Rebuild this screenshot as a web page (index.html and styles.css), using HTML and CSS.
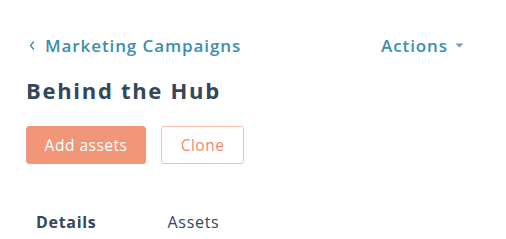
FILE: index.html
```html
<!DOCTYPE html>
<html><head><meta charset="utf-8"><link rel="stylesheet" href="styles.css"></head>
<body>
<div class="page">
  <div class="header">
    <a class="crumb" href="#">
      <svg class="chev" width="6" height="9" viewBox="0 0 6 9"><path d="M4.5 1 L1.5 4.5 L4.5 8" fill="none" stroke="#3e8fae" stroke-width="1.4" stroke-linecap="round" stroke-linejoin="round"/></svg>
      <span class="crumb-text">Marketing Campaigns</span>
    </a>
    <a class="actions" href="#">
      <span>Actions</span>
      <svg class="caret" width="9" height="5" viewBox="0 0 9 5"><path d="M0.5 0.5 H8.5 L4.5 4.5 Z" fill="#7c98b6"/></svg>
    </a>
  </div>
  <h1 class="title">Behind the Hub</h1>
  <div class="buttons">
    <button class="btn btn-primary">Add assets</button>
    <button class="btn btn-secondary">Clone</button>
  </div>
  <div class="tabs">
    <div class="tab tab-active">Details</div>
    <div class="tab">Assets</div>
  </div>
</div>
</body></html>
```
FILE: styles.css
```css
html,body{margin:0;padding:0;background:#fff}
body{font-family:"Open Sans","Liberation Sans",sans-serif;color:#33475b}
.page{padding:33px 42px 0 26px}
.header{display:flex;justify-content:space-between;align-items:center;height:24px}
.crumb,.actions{display:flex;align-items:center;text-decoration:none;color:#3a8fb0;font-weight:600;font-size:17px;letter-spacing:0.9px}
.chev{margin-left:3px;margin-right:10px}
.caret{margin-left:7px}
.title{margin:19px 0 0;font-size:22px;font-weight:700;letter-spacing:1.7px;line-height:28px}
.buttons{display:flex;gap:15px;margin-top:22px}
.btn{height:38px;border-radius:3px;font-family:inherit;font-size:15.5px;letter-spacing:0.5px;padding:0;cursor:pointer}
.btn-primary{width:120px;background:#f2967a;border:1px solid #f2967a;color:#fff}
.btn-secondary{width:83px;background:#fff;border:1px solid #f8bfab;color:#f2896a}
.tabs{display:flex;margin-top:48px;padding-left:10px}
.tab{font-size:16px;letter-spacing:0.7px;line-height:20px;margin-right:71px}
.tab-active{font-weight:700}
```
